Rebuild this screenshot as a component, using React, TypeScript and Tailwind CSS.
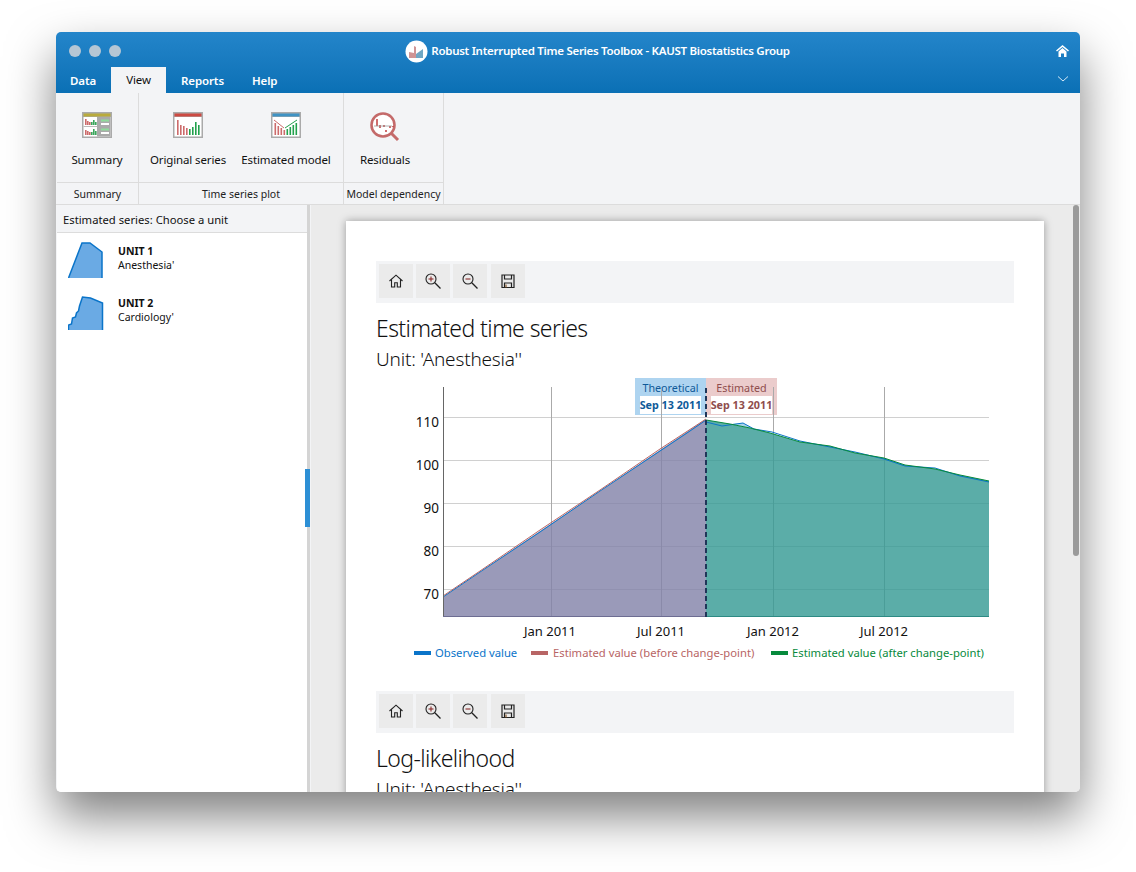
import type { ReactNode } from "react";

const font = { fontFamily: '"Noto Sans", "Open Sans", sans-serif' };

function HomeIcon() {
  return (
    <svg width="16" height="16" viewBox="0 0 16 16" fill="none" stroke="#222" strokeWidth="1.1">
      <path d="M1.5 8 8 2.2 14.5 8M3.5 6.8V14h3.2V9.8h2.6V14h3.2V6.8" />
    </svg>
  );
}

function ZoomIcon({ plus }: { plus: boolean }) {
  return (
    <svg width="18" height="18" viewBox="0 0 18 18" fill="none" stroke="#222" strokeWidth="1.1">
      <circle cx="7" cy="7" r="5" />
      <path d="M10.8 10.8 16.5 16.5" strokeWidth="1.3" />
      <path d="M4.5 7h5" stroke="#8a2c2c" />
      {plus && <path d="M7 4.5v5" stroke="#8a2c2c" />}
    </svg>
  );
}

function SaveIcon() {
  return (
    <svg width="16" height="16" viewBox="0 0 16 16" fill="none" stroke="#222" strokeWidth="1.2">
      <path d="M2 2h12v12.5H2z" />
      <path d="M4.5 2v4h7V2M4.5 14.5V10h7v4.5" />
      <path d="M6 11.5v3" stroke="#8a5a2c" />
    </svg>
  );
}

function Toolbar() {
  const btn = "w-[34px] h-[34px] bg-[#ebebeb] flex items-center justify-center";
  return (
    <div className="h-[42px] bg-[#f3f4f6] flex items-start pt-[3px] pl-[3px] gap-[3px]">
      <div className={btn}><HomeIcon /></div>
      <div className={btn}><ZoomIcon plus /></div>
      <div className={btn}><ZoomIcon plus={false} /></div>
      <div className={`${btn} ml-[1px]`}><SaveIcon /></div>
    </div>
  );
}

function IconFrame({ bar, children }: { bar: string; children: ReactNode }) {
  return (
    <svg width="30" height="26" viewBox="0 0 30 26">
      <rect x="0" y="0" width="30" height="26" fill="#aaaaaa" />
      <rect x="1.5" y="5" width="27" height="19.5" fill="#ffffff" />
      <rect x="1.5" y="1.5" width="27" height="3" fill={bar} />
      {children}
    </svg>
  );
}

function Bars({ items, color }: { items: number[][]; color: string }) {
  return (
    <>
      {items.map(([x, y, h], i) => (
        <rect key={i} x={x} y={y} width="1.6" height={h} fill={color} />
      ))}
    </>
  );
}

function SummaryIcon() {
  return (
    <IconFrame bar="#b9ab3c">
      <rect x="15" y="5" width="13.5" height="19.5" fill="#aaaaaa" />
      <rect x="19" y="7.5" width="8" height="2" fill="#8fdb9b" />
      <rect x="19" y="11" width="8" height="2" fill="#ffffff" />
      <rect x="19" y="16.5" width="8" height="2" fill="#8fdb9b" />
      <rect x="19" y="20" width="8" height="2" fill="#ffffff" />
      <rect x="1.5" y="14" width="13.5" height="1" fill="#bbbbbb" />
      <Bars color="#cc6b6b" items={[[3, 7, 6], [5, 9, 4], [7, 10, 3], [3, 18, 5], [5, 19, 4], [7, 20, 3]]} />
      <Bars color="#3ba55c" items={[[9, 10, 3], [11, 8, 5], [13, 10, 3], [9, 20, 3], [11, 17, 6], [13, 19, 4]]} />
    </IconFrame>
  );
}

function OriginalIcon() {
  return (
    <IconFrame bar="#cd4a42">
      <Bars color="#cc6b6b" items={[[4, 8, 15], [7, 13, 10], [10, 14, 9], [13, 16, 7]]} />
      <Bars color="#22a14c" items={[[16, 17, 6], [19, 15, 8], [22, 10, 13], [25, 13, 10]]} />
    </IconFrame>
  );
}

function EstimatedIcon() {
  return (
    <IconFrame bar="#3f93c4">
      <Bars color="#cc6b6b" items={[[3.5, 11, 12], [6.5, 14, 9], [9.5, 16, 7], [12.5, 18, 5]]} />
      <Bars color="#22a14c" items={[[15.5, 17, 6], [18.5, 15, 8], [21.5, 13, 10], [24.5, 11, 12]]} />
      <path d="M3 8 13 16" stroke="#cc6b6b" strokeWidth="1" fill="none" />
      <path d="M14 16 26 8" stroke="#22a14c" strokeWidth="1" fill="none" />
    </IconFrame>
  );
}

function ResidualsIcon() {
  return (
    <svg width="30" height="30" viewBox="0 0 30 30" fill="none">
      <circle cx="13" cy="13" r="11.5" fill="#ffffff" stroke="#c46a6a" strokeWidth="2.6" />
      <path d="M21.500 21.500 28 28" stroke="#c46a6a" strokeWidth="3" />
      <path d="M7 7v7M10 13v3M14 13v2M16 18v2M20 14v2M23 14v1" stroke="#c44a4a" strokeWidth="1.6" />
      <path d="M4 14h18" stroke="#999999" strokeWidth="0.8" />
    </svg>
  );
}

function RibbonItem({ width, icon, label }: { width: string; icon: ReactNode; label: string }) {
  return (
    <div className={`${width} flex flex-col items-center`}>
      <div className="h-[26px] mt-[19px] flex items-start justify-center">{icon}</div>
      <div className="mt-[14px] text-[11.5px] leading-[16px] tracking-[-0.01em] text-[#111] whitespace-nowrap">{label}</div>
    </div>
  );
}

function RibbonGroup({ width, label, children }: { width: string; label: string; children: ReactNode }) {
  return (
    <div className={`${width} h-full border-r border-[#dcdcdc] flex flex-col`}>
      <div className="h-[90px] flex border-b border-[#dcdcdc]">{children}</div>
      <div className="flex-1 pt-[3px] flex items-center justify-center text-[10.5px] text-[#222] whitespace-nowrap">{label}</div>
    </div>
  );
}

function Sparkline({ d, top }: { d: string; top: string }) {
  return (
    <svg width="36" height="36" viewBox="0 0 36 36" className="shrink-0">
      <path d={d} fill="#6aaae4" />
      <path d={top} fill="none" stroke="#0a74c9" strokeWidth="1.5" />
    </svg>
  );
}

function UnitRow({ unit, name, spark }: { unit: string; name: string; spark: ReactNode }) {
  return (
    <div className="h-[52px] flex items-start pt-[4px] pl-[11px] gap-[14px]">
      {spark}
      <div className="mt-[2px] text-[#111]">
        <div className="text-[10.5px] leading-[14px] font-bold">{unit}</div>
        <div className="text-[10.5px] leading-[14px]">{name}</div>
      </div>
    </div>
  );
}

function ChartTip({ left, box, fg, title, date }: { left: string; box: string; fg: string; title: string; date: string }) {
  return (
    <div className={`absolute top-0 ${left} w-[71px] h-[37px] ${box} flex flex-col items-center`}>
      <div className={`h-[18px] text-[10.75px] leading-[20px] ${fg}`}>{title}</div>
      <div className={`bg-white h-[18px] text-[10.75px] leading-[18px] font-bold whitespace-nowrap ${fg}`}>{date}</div>
    </div>
  );
}

function Chart() {
  const grid = [417.5, 460.5, 503.5, 546.5, 589.5];
  const ticks = [551.5, 661.5, 773.5, 884.5];
  const yLabels = [["110", 427], ["100", 470], ["90", 513], ["80", 556], ["70", 599]] as const;
  const xLabels = [["Jan 2011", 550], ["Jul 2011", 661], ["Jan 2012", 773], ["Jul 2012", 884]] as const;
  const after = "706,420 730,424 750,428 770,433 800,442 830,446 855,453 884,458 905,465 935,469 960,475 989,481";
  const afterObs = "706,422 722,426 743,423 754,429 772,432 800,441 830,447 855,452 884,459 905,466 935,468 960,476 989,482";
  return (
    <div className="relative h-[265px]">
      <ChartTip left="left-[259px]" box="bg-[#aed4f0]" fg="text-[#0f5a99]" title="Theoretical" date="Sep 13 2011" />
      <ChartTip left="left-[330px]" box="bg-[#ebcccc]" fg="text-[#8f4d4d]" title="Estimated" date="Sep 13 2011" />
      <svg width="638" height="265" viewBox="376 378 638 265" className="relative block">
        {grid.map((y) => (
          <line key={y} x1="443" x2="989" y1={y} y2={y} stroke="#d0d0d0" />
        ))}
        {ticks.map((x) => (
          <line key={x} x1={x} x2={x} y1="387" y2="617" stroke="#aaaaaa" />
        ))}
        <polygon points="443,597 480,572 540,531 600,491 660,450 706,419 706,617 443,617" fill="#8282a9" fillOpacity="0.81" />
        <polygon points={`${after} 989,617 706,617`} fill="#359a94" fillOpacity="0.81" />
        <polygon points="730,424 743,423 754,429 750,428" fill="#a9d3ea" />
        <polyline points="443,597 480,572 540,532 600,491 660,451 690,431 706,420" fill="none" stroke="#0a74c9" strokeWidth="1" />
        <polyline points="443,596 480,571 540,530 600,490 660,449 706,419" fill="none" stroke="#b86565" strokeWidth="1" />
        <polyline points={afterObs} fill="none" stroke="#0a74c9" strokeWidth="1" />
        <polyline points={after} fill="none" stroke="#078a3c" strokeWidth="1" />
        <line x1="443.5" x2="443.5" y1="387" y2="617" stroke="#666" />
        <line x1="443" x2="706" y1="616.5" y2="616.5" stroke="#6d6d92" />
        <line x1="706" x2="989" y1="616.5" y2="616.5" stroke="#2d8a84" />
        <line x1="706" x2="706" y1="388" y2="617" stroke="#1f3658" strokeWidth="2" strokeDasharray="5 3" />
        {yLabels.map(([t, y]) => (
          <text key={t} x="439" y={y} textAnchor="end" fontSize="13.5" fill="#111">{t}</text>
        ))}
        {xLabels.map(([t, x]) => (
          <text key={t} x={x} y="636" textAnchor="middle" fontSize="13" fill="#111">{t}</text>
        ))}
      </svg>
    </div>
  );
}

function Legend() {
  return (
    <div className="h-[20px] pl-[38px] flex items-center text-[11.25px] whitespace-nowrap">
      <span className="w-[17px] h-[4px] bg-[#0a74c9]" />
      <span className="ml-[4px] w-[96px] text-[#0a74c9]">Observed value</span>
      <span className="w-[17px] h-[4px] bg-[#b86565]" />
      <span className="ml-[5px] w-[218px] text-[#b86565]">Estimated value (before change-point)</span>
      <span className="w-[17px] h-[4px] bg-[#078a3c]" />
      <span className="ml-[4px] text-[#078a3c]">Estimated value (after change-point)</span>
    </div>
  );
}

export default function App() {
  return (
    <div className="h-[872px] bg-white pt-[32px] pl-[56px] overflow-hidden" style={font}>
      <div className="w-[1024px] h-[760px] rounded-[5px] overflow-hidden flex flex-col bg-[#f3f4f6] shadow-[0_24px_48px_rgba(0,0,0,0.5)]">
        {/* Title bar and tabs */}
        <div className="h-[61px] shrink-0 bg-gradient-to-b from-[#2385ca] to-[#0a70b5] relative">
          <div className="flex items-center h-[38px] pl-[13px] pr-[11px]">
            <div className="flex gap-[8px]">
              <span className="w-[12px] h-[12px] rounded-full bg-[#b6c6d4]" />
              <span className="w-[12px] h-[12px] rounded-full bg-[#b6c6d4]" />
              <span className="w-[12px] h-[12px] rounded-full bg-[#b6c6d4]" />
            </div>
            <div className="flex-1 flex items-center justify-center gap-[3px] pl-[18px]">
              <svg width="23" height="23" viewBox="0 0 23 23">
                <circle cx="11.5" cy="11.5" r="11" fill="#ffffff" />
                <path d="M4 18v-6l5 1V6l2 1v11z" fill="#cf9494" />
                <path d="M11 18v-4l7-5v9z" fill="#6fa7c4" />
              </svg>
              <span className="text-[11.5px] tracking-[-0.025em] font-semibold text-white whitespace-nowrap">
                Robust Interrupted Time Series Toolbox - KAUST Biostatistics Group
              </span>
            </div>
            <svg width="13" height="12" viewBox="0 0 13 12" fill="#ffffff">
              <path d="M6.5 0 13 5.6l-1 1L6.5 2 1 6.6 0 5.6z" />
              <path d="M2.5 6.5 6.5 3l4 3.5V12H8V8.5H5V12H2.500z" />
            </svg>
          </div>
          <div className="flex items-end h-[23px] pl-[55px] text-[11.5px] tracking-[-0.01em] font-semibold text-white">
            <span className="w-[56px] -ml-[56px] pl-[15px] text-left pb-[4px]">Data</span>
            <span className="w-[55px] h-[26px] bg-[#f3f4f6] text-[#111] font-normal flex items-center justify-center">View</span>
            <span className="w-[71px] pl-[15px] text-left pb-[4px]">Reports</span>
            <span className="pl-[15px] text-left pb-[4px]">Help</span>
          </div>
          <svg width="12" height="6" viewBox="0 0 12 6" className="absolute right-[11px] top-[44px]" fill="none" stroke="#d5e8f5">
            <path d="M1 .5 6 5 11 .5" />
          </svg>
        </div>

        {/* Ribbon */}
        <div className="h-[112px] shrink-0 flex pl-[1px] border-b border-[#dcdcdc]">
          <RibbonGroup width="w-[82px]" label="Summary">
            <RibbonItem width="w-[80px]" icon={<SummaryIcon />} label="Summary" />
          </RibbonGroup>
          <RibbonGroup width="w-[205px]" label="Time series plot">
            <RibbonItem width="w-[98px]" icon={<OriginalIcon />} label="Original series" />
            <RibbonItem width="w-[98px]" icon={<EstimatedIcon />} label="Estimated model" />
          </RibbonGroup>
          <RibbonGroup width="w-[100px]" label="Model dependency">
            <RibbonItem width="w-[82px]" icon={<ResidualsIcon />} label="Residuals" />
          </RibbonGroup>
        </div>

        {/* Body */}
        <div className="flex-1 min-h-0 flex relative">
          <div className="w-[250px] ml-[1px] bg-white flex flex-col shrink-0">
            <div className="h-[28px] bg-[#f3f4f6] border-b border-[#dcdcdc] pl-[6px] text-[11.25px] leading-[29px] text-[#111]">
              Estimated series: Choose a unit
            </div>
            <div className="pt-[5px]">
              <UnitRow
                unit="UNIT 1"
                name="Anesthesia'"
                spark={<Sparkline d="M0.500 36 14 1h8l12 9v26z" top="M0.500 36 14 1h8l12 9v26" />}
              />
              <UnitRow
                unit="UNIT 2"
                name="Cardiology'"
                spark={<Sparkline d="M0.500 36v-5l3-1 1-6 3-1 1-4 2-2 1-5 3-9 8 1 12 5v30z" top="M0.500 36v-5l3-1 1-6 3-1 1-4 2-2 1-5 3-9 8 1 12 5v30" />}
              />
            </div>
          </div>
          <div className="w-[3px] bg-[#d4d4d4] shrink-0" />
          <div className="w-[1px] bg-[#f3f4f6] shrink-0" />
          <div className="absolute left-[249px] top-[264px] w-[5px] h-[58px] bg-[#2d8fd5]" />

          <div className="flex-1 bg-[#ebebeb] relative overflow-hidden pl-[35px] pt-[16px]">
            <div className="w-[698px] h-[700px] bg-white shadow-[0_0_8px_rgba(0,0,0,0.35)] px-[30px] pt-[40px]">
              <Toolbar />
              <div className="mt-[8px] text-[23px] leading-[34px] tracking-[-0.025em] font-light text-[#111]">Estimated time series</div>
              <div className="mt-[1px] text-[19px] leading-[26px] tracking-[-0.01em] font-light text-[#111]">Unit: 'Anesthesia''</div>
              <div className="mt-[6px]"><Chart /></div>
              <Legend />
              <div className="mt-[28px]"><Toolbar /></div>
              <div className="mt-[8px] text-[23px] leading-[34px] tracking-[-0.025em] font-light text-[#111]">Log-likelihood</div>
              <div className="mt-[1px] text-[19px] leading-[26px] tracking-[-0.01em] font-light text-[#111]">Unit: 'Anesthesia''</div>
            </div>
            <div className="absolute top-0 right-[1px] w-[6px] h-[351px] rounded-full bg-[#9a9a9a]" />
          </div>
        </div>
      </div>
    </div>
  );
}
